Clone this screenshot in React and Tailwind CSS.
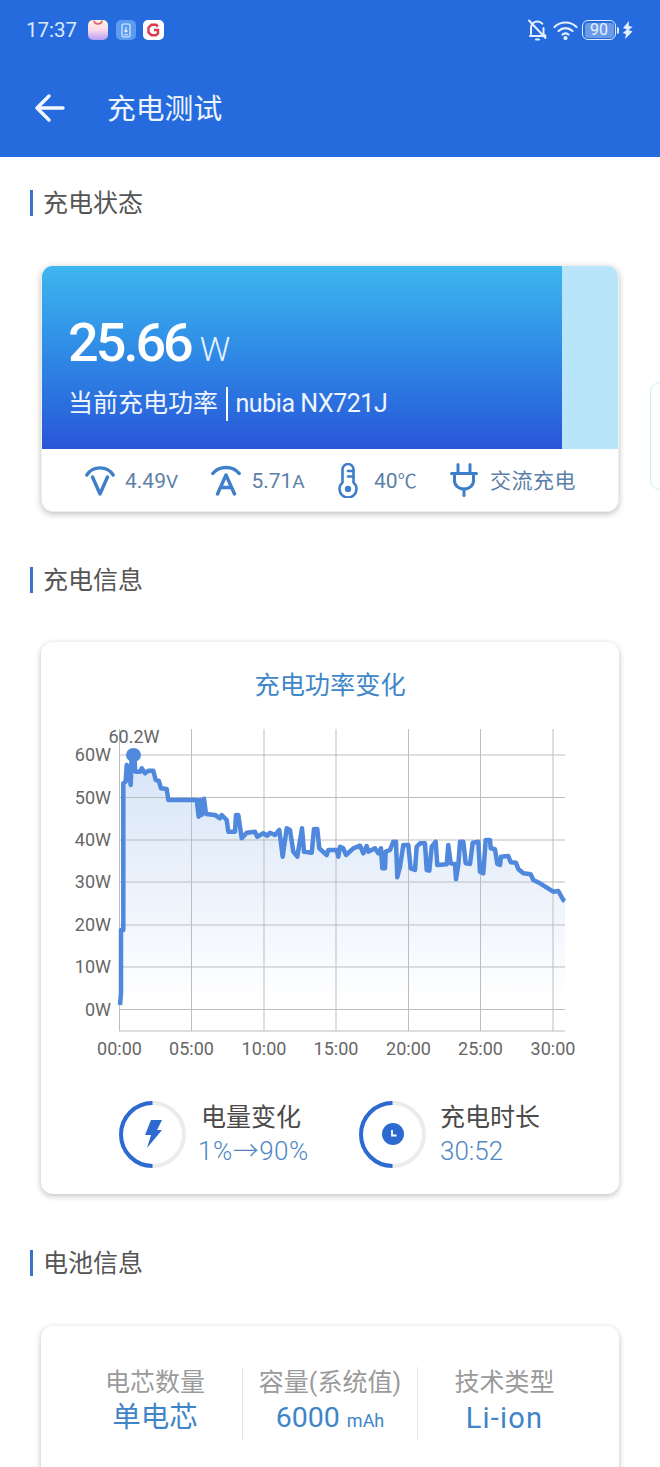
// traced from the reference, [x, y] in page pixels x3
const leftTrace = [[180,855],[183,820],[183,630],[190,630],[190,190],[197,185],[200,135],[207,150],[212,195],[215,110],[222,100],[226,155],[240,155],[245,145],[255,160],[265,152],[280,152],[287,180],[296,182],[303,205],[320,207],[325,240],[350,240],[395,240],[410,240],[416,290],[420,240],[425,285],[432,236],[438,282],[465,285],[480,295],[485,285],[500,300],[505,335],[525,335],[528,285],[535,285],[545,355],[560,338],[585,335],[592,350],[610,340],[622,347],[630,338],[645,345],[658,330],[668,410],[680,325],[690,330],[700,395],[712,410],[726,325],[732,395],[755,398],[762,327],[772,327],[778,385]];
const rightTrace = [[20,405],[25,390],[50,390],[55,410],[60,380],[70,385],[78,405],[100,385],[120,377],[130,400],[140,378],[145,395],[165,385],[175,400],[183,385],[187,445],[195,445],[197,395],[210,390],[220,365],[228,365],[232,472],[240,440],[250,375],[265,375],[272,445],[285,450],[290,380],[300,370],[315,370],[320,450],[328,452],[335,380],[347,365],[352,435],[380,433],[385,375],[392,430],[405,432],[408,478],[415,435],[420,365],[430,365],[437,430],[450,432],[458,368],[475,365],[480,455],[490,460],[497,360],[510,360],[512,385],[525,388],[532,432],[540,435],[543,410],[565,408],[572,427],[588,428],[595,447],[610,460],[632,463],[640,480],[660,490],[700,515],[715,513],[730,540],[735,543]];

const points = [
  ...leftTrace.map(([x, y]) => [60 + x / 3, 720 + y / 3]),
  ...rightTrace.map(([x, y]) => [320 + x / 3, 720 + y / 3]),
];
const line = points.map(([x, y]) => `${x.toFixed(1)},${y.toFixed(1)}`).join(' ');
const area = `120,1031 ${line} 565,1031`;

const yTicks = [['60W', 755], ['50W', 797.5], ['40W', 840], ['30W', 882], ['20W', 925], ['10W', 967], ['0W', 1009.5]];
const xTicks = [['00:00', 119.5], ['05:00', 191.5], ['10:00', 264], ['15:00', 336], ['20:00', 408.5], ['25:00', 480.5], ['30:00', 553]];

function SectionTitle({ children }) {
  return (
    <div className="flex items-center h-[26px] ml-[30px]">
      <div className="w-[3px] h-[26px] bg-[#3a72c8]" />
      <h2 className="ml-[10px] pt-[2px] text-[25px] leading-[26px] text-[#555555]">{children}</h2>
    </div>
  );
}

function StatusIcons() {
  return (
    <div className="flex items-center">
      <svg width="21" height="22" viewBox="0 0 21 22" fill="none" stroke="#e4eeff" strokeWidth="2">
        <path d="M4 15V9c0-4 3-6.500 6.500-6.500 2 0 3.700.8 4.800 2.200M16.500 9v6l2 2H3" strokeLinecap="round" strokeLinejoin="round" />
        <path d="M2 1.500 18.500 19" strokeLinecap="round" />
        <path d="M9 20.500h3" strokeLinecap="round" />
      </svg>
      <svg width="25" height="20" viewBox="0 0 25 20" fill="none" stroke="#e4eeff" strokeWidth="2.200" strokeLinecap="round" className="ml-[5px]">
        <path d="M1.500 7C7.500 1 17.500 1 23.500 7" />
        <path d="M5.500 11c4-3.800 10-3.800 14 0" />
        <path d="M9.500 14.500c2-1.600 4-1.600 6 0" />
        <circle cx="12.500" cy="18" r="1" fill="#e4eeff" />
      </svg>
      <div className="ml-[4px] w-[34px] h-[20px] rounded-[6px] border-[1.500px] border-[#dce9ff] p-[1.500px] flex">
        <div className="flex-1 rounded-[3px] bg-[#6a9ae8] flex items-center justify-center text-[16px] leading-none text-[#e8f1ff]">90</div>
      </div>
      <div className="ml-[1px] w-[2px] h-[7px] rounded-r-sm bg-[#dce9ff]" />
      <svg width="11" height="18" viewBox="0 0 11 18" fill="#e4eeff" className="ml-[3px]">
        <path d="M7 0 1 7l4 1.500L.8 12l3.200 1.200L3 18l7.500-7.500-4-1.500 4-3-3.800-1.300z" />
      </svg>
    </div>
  );
}

function AppIcons() {
  return (
    <div className="flex items-center ml-[11px]">
      <div className="w-[20px] h-[20px] rounded-[5px] overflow-hidden bg-gradient-to-b from-[#fff6d8] via-[#fbd8ec] to-[#b79cf0] flex justify-center">
        <svg width="12" height="8" viewBox="0 0 12 8" fill="none" stroke="#e0557f" strokeWidth="1.300">
          <path d="M2 1c.8 4 7.200 4 8 0" strokeLinecap="round" />
        </svg>
      </div>
      <div className="ml-[8px] w-[20px] h-[20px] rounded-[5px] bg-[#5b9bf0] flex items-center justify-center">
        <svg width="10" height="15" viewBox="0 0 10 15" fill="none" stroke="#e8f1ff" strokeWidth="1.100">
          <rect x="1" y="1" width="8" height="13" rx="1.500" />
          <path d="M5 4v5M3.500 7.500 5 9l1.500-1.500M3 11.800h4" />
        </svg>
      </div>
      <div className="ml-[7px] w-[21px] h-[20px] rounded-[5px] bg-white flex items-center justify-center">
        <svg width="13" height="14" viewBox="0 0 13 14" fill="none" stroke="#dc3a4e" strokeWidth="2.400">
          <path d="M11 3.500 9 1.800H4.500L1.500 4.500v5l3 2.700H9l2-1.700V7H7" />
        </svg>
      </div>
    </div>
  );
}

function StatItem({ icon, children, textClass = 'ml-[10px] text-[21px]' }) {
  return (
    <div className="flex items-center">
      {icon}
      <span className={`${textClass} pt-[2px] leading-none text-[#5c80a8] whitespace-nowrap`}>{children}</span>
    </div>
  );
}

function VoltIcon() {
  return (
    <svg width="30" height="32" viewBox="0 0 30 32" fill="none" stroke="#3f7fc9" strokeWidth="3.400" strokeLinecap="round" strokeLinejoin="round">
      <path d="M1.800 11C8 1.500 22 1.500 28.200 11" />
      <path d="M7.500 13 15 30l7.500-17" />
    </svg>
  );
}

function AmpIcon() {
  return (
    <svg width="30" height="32" viewBox="0 0 30 32" fill="none" stroke="#3f7fc9" strokeWidth="3.400" strokeLinecap="round" strokeLinejoin="round">
      <path d="M1.800 9.500C8 1.500 22 1.500 28.200 9.500" />
      <path d="M6.500 30 15 11l8.500 19M10 23.500h10" />
    </svg>
  );
}

function ThermoIcon() {
  return (
    <svg width="20" height="35" viewBox="0 0 20 35" fill="none" stroke="#3f7fc9" strokeWidth="2.600" strokeLinecap="round">
      <path d="M4.500 19.500V6.500a5.500 5.500 0 0 1 11 0v13a8.500 8.500 0 1 1-11 0z" />
      <path d="M10 8h5.500M10 13.500h5.500" />
      <circle cx="10" cy="26" r="3.200" fill="#3f7fc9" stroke="none" />
    </svg>
  );
}

function PlugIcon() {
  return (
    <svg width="28" height="34" viewBox="0 0 28 34" fill="none" stroke="#3f7fc9" strokeWidth="3" strokeLinecap="round" strokeLinejoin="round">
      <path d="M8 1.500V10M20 1.500V10M1.500 10.500h25" />
      <path d="M4.500 10.500v7c0 5 4 8.500 9.500 8.500s9.500-3.500 9.500-8.500v-7" />
      <path d="M14 26v6.500" />
    </svg>
  );
}

function Ring({ children }) {
  return (
    <div className="relative w-[67px] h-[67px] flex items-center justify-center">
      <svg width="67" height="67" viewBox="0 0 67 67" fill="none" strokeWidth="4" className="absolute inset-0">
        <circle cx="33.500" cy="33.500" r="31.500" stroke="#ececec" />
        <path d="M33.500 2a31.500 31.500 0 0 0 0 63" stroke="#2c6ad2" />
      </svg>
      {children}
    </div>
  );
}

function ChargeChart() {
  return (
    <svg width="578" height="345" viewBox="41 720 578 345" className="block mt-[20px]">
      <defs>
        <linearGradient id="fade" x1="0" y1="0" x2="0" y2="1">
          <stop offset="0" stopColor="#d6e4f7" />
          <stop offset="0.9" stopColor="#ffffff" />
        </linearGradient>
      </defs>
      <polygon points={area} fill="url(#fade)" />
      {yTicks.map(([, y]) => (
        <line key={y} x1="119" x2="565" y1={y} y2={y} stroke="#bdbdbd" strokeWidth="1" />
      ))}
      <line x1="119" x2="565" y1="1031" y2="1031" stroke="#bdbdbd" strokeWidth="1" />
      {xTicks.map(([, x]) => (
        <line key={x} x1={x} x2={x} y1="729" y2="1031" stroke="#bdbdbd" strokeWidth="1" />
      ))}
      <polyline points={line} fill="none" stroke="#4f88dc" strokeWidth="4.500" strokeLinejoin="round" />
      <ellipse cx="133.500" cy="755" rx="7.500" ry="7" fill="#4f88dc" />
      <text x="134" y="743" textAnchor="middle" fontSize="18" fill="#666666">60.2W</text>
      {yTicks.map(([label, y]) => (
        <text key={label} x="111" y={y + 6} textAnchor="end" fontSize="18" fill="#666666">{label}</text>
      ))}
      {xTicks.map(([label, x]) => (
        <text key={label} x={x} y="1055" textAnchor="middle" fontSize="18" fill="#666666">{label}</text>
      ))}
    </svg>
  );
}

export default function App() {
  return (
    <div className="relative w-[660px] h-[1467px] overflow-hidden bg-white font-['Roboto','Noto_Sans_CJK_SC',sans-serif]">
      {/* Header */}
      <header className="h-[157px] bg-[#266bde]">
        <div className="flex items-center justify-between h-[60px] pl-[26px] pr-[27px]">
          <div className="flex items-center">
            <span className="text-[20.500px] leading-none text-[#dce9ff]">17:37</span>
            <AppIcons />
          </div>
          <StatusIcons />
        </div>
        <div className="flex items-center h-[96px] pl-[35px]">
          <svg width="30" height="30" viewBox="0 0 30 30" fill="none" stroke="#f2f6ff" strokeWidth="3.400" strokeLinecap="round" strokeLinejoin="round">
            <path d="M28 15H3M14 3 2 15l12 12" />
          </svg>
          <h1 className="ml-[42px] pt-[2px] text-[28.800px] leading-none text-[#eef4ff]">充电测试</h1>
        </div>
      </header>

      <main className="pt-[33px]">
        <SectionTitle>充电状态</SectionTitle>

        {/* Current power */}
        <section className="mx-[41px] mt-[49px] h-[247px] rounded-[12px] bg-white border border-[#eeeeee] shadow-[0_2px_6px_rgba(0,0,0,0.25)] overflow-hidden">
          <div className="h-[183px] bg-[#b9e5fb]">
            <div className="w-[520px] h-full bg-gradient-to-b from-[#3eb6ef] to-[#2a55d8] pl-[26px] pt-[50px] text-white">
              <div className="flex items-baseline h-[54px]">
                <span className="text-[54px] leading-[54px] font-medium tracking-[-3px]">25.66</span>
                <span className="ml-[9px] text-[34px] leading-[54px] font-light text-[#e8f1ff]">W</span>
              </div>
              <div className="flex items-center mt-[17px] h-[34px] text-[25px] text-[#f0f5ff]">
                <span>当前充电功率</span>
                <div className="ml-[8px] w-[1.500px] h-[34px] bg-white" />
                <span className="ml-[8px] tracking-[-0.450px]">nubia NX721J</span>
              </div>
            </div>
          </div>
          <div className="flex items-center justify-between h-[62px] pl-[43px] pr-[42px]">
            <StatItem icon={<VoltIcon />}>4.49<span className="text-[19px]">V</span></StatItem>
            <StatItem icon={<AmpIcon />}>5.71<span className="text-[19px]">A</span></StatItem>
            <StatItem icon={<ThermoIcon />} textClass="ml-[16px] text-[21px]">40<span className="text-[19px]">℃</span></StatItem>
            <StatItem icon={<PlugIcon />} textClass="ml-[12px] tracking-[0.500px] text-[21px]">交流充电</StatItem>
          </div>
        </section>

        <div className="mt-[55px]">
          <SectionTitle>充电信息</SectionTitle>
        </div>

        {/* Charging info */}
        <section className="mx-[41px] mt-[49px] h-[552px] rounded-[12px] bg-white shadow-[0_2px_6px_rgba(0,0,0,0.25)] pt-[29px]">
          <h3 className="text-center text-[25.200px] leading-[29px] text-[#3f87c9]">充电功率变化</h3>
          <ChargeChart />
          <div className="flex mt-[35px] pl-[78px]">
            <div className="flex items-center w-[240px]">
              <Ring>
                <svg width="18" height="30" viewBox="0 0 18 30" fill="#2c6ad2">
                  <path d="M7 1h11l-5 10h5L3 29l4-13H1z" />
                </svg>
              </Ring>
              <div className="ml-[15px] pt-[2px]">
                <div className="text-[25px] leading-[32px] text-[#4a4a4a]">电量变化</div>
                <div className="-ml-[3px] text-[26px] leading-[34px] tracking-[0.500px] text-[#4f87c5] font-light whitespace-nowrap">1%→90%</div>
              </div>
            </div>
            <div className="flex items-center">
              <Ring>
                <div className="w-[22px] h-[22px] rounded-full bg-[#2c6ad2] flex items-center justify-center">
                  <svg width="12" height="12" viewBox="0 0 12 12" fill="none" stroke="#ffffff" strokeWidth="1.800">
                    <path d="M5 2v5.500h4.500" />
                  </svg>
                </div>
              </Ring>
              <div className="ml-[14px] pt-[2px]">
                <div className="text-[25px] leading-[32px] text-[#4a4a4a] whitespace-nowrap">充电时长</div>
                <div className="text-[26px] leading-[34px] text-[#4f87c5] font-light">30:52</div>
              </div>
            </div>
          </div>
        </section>

        <div className="mt-[56px]">
          <SectionTitle>电池信息</SectionTitle>
        </div>

        {/* Battery info */}
        <section className="mx-[41px] mt-[50px] h-[200px] rounded-[12px] bg-white shadow-[0_2px_6px_rgba(0,0,0,0.25)] px-[27px] pt-[41px]">
          <div className="grid grid-cols-[174px_175px_174px] h-[71px]">
            <div className="text-center">
              <div className="text-[25px] leading-[32px] text-[#9a9a9a]">电芯数量</div>
              <div className="text-[28.500px] leading-[38px] text-[#4085c8]">单电芯</div>
            </div>
            <div className="text-center border-l border-[#e6e6e6]">
              <div className="text-[25px] leading-[32px] text-[#9a9a9a] whitespace-nowrap">容量(系统值)</div>
              <div className="text-[28.500px] leading-[38px] text-[#4085c8]">6000 <span className="text-[18px]">mAh</span></div>
            </div>
            <div className="text-center border-l border-[#e6e6e6]">
              <div className="text-[25px] leading-[32px] text-[#9a9a9a]">技术类型</div>
              <div className="text-[29px] leading-[38px] tracking-[1.200px] text-[#4085c8]">Li-ion</div>
            </div>
          </div>
        </section>
      </main>

      {/* Next carousel card peeking in */}
      <div className="absolute left-[650px] top-[382px] w-[30px] h-[108px] rounded-[10px] border border-[#cfeeea] bg-white" />
    </div>
  );
}
